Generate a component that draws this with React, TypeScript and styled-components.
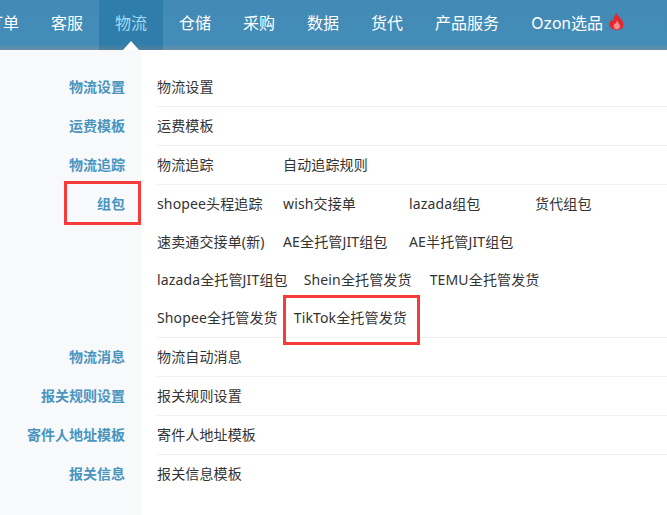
import React from "react";
import styled, { createGlobalStyle } from "styled-components";

const navItems = ["订单", "客服", "物流", "仓储", "采购", "数据", "货代", "产品服务"];

const sections = [
  { label: "物流设置", links: ["物流设置"] },
  { label: "运费模板", links: ["运费模板"] },
  { label: "物流追踪", links: ["物流追踪", "自动追踪规则"] },
  {
    label: "组包",
    links: [
      "shopee头程追踪",
      "wish交接单",
      "lazada组包",
      "货代组包",
      "速卖通交接单(新)",
      "AE全托管JIT组包",
      "AE半托管JIT组包",
      "lazada全托管JIT组包",
      "Shein全托管发货",
      "TEMU全托管发货",
      "Shopee全托管发货",
      "TikTok全托管发货",
    ],
  },
  { label: "物流消息", links: ["物流自动消息"] },
  { label: "报关规则设置", links: ["报关规则设置"] },
  { label: "寄件人地址模板", links: ["寄件人地址模板"] },
  { label: "报关信息", links: ["报关信息模板"] },
];

const GlobalStyle = createGlobalStyle`
  html, body {
    margin: 0;
    padding: 0;
    background: #fff;
    overflow: hidden;
  }
  body {
    font-family: "Noto Sans", "Noto Sans CJK SC", sans-serif;
  }
`;

const Page = styled.div`
  width: 667px;
  height: 515px;
  overflow: hidden;
  position: relative;
`;

const NavBar = styled.nav`
  display: flex;
  height: 50px;
  margin-left: -29px;
  background: linear-gradient(#438bb6 0, #438cb8 44px, #6a8fa6 50px);
`;

const NavItem = styled.a<{ $active?: boolean }>`
  position: relative;
  display: flex;
  align-items: center;
  flex-shrink: 0;
  gap: 6px;
  padding: 0 16px 6px;
  font-family: Inter, "Noto Sans CJK SC", sans-serif;
  font-size: 16px;
  white-space: nowrap;
  color: ${(p) => (p.$active ? "#a5dcf5" : "#fff")};
  background: ${(p) =>
    p.$active ? "linear-gradient(#2f7dab 0, #2f7dab 44px, #55809b 50px)" : "none"};

  ${(p) =>
    p.$active &&
    `
    &::after {
      content: "";
      position: absolute;
      left: 24px;
      bottom: 0;
      border-left: 8px solid transparent;
      border-right: 8px solid transparent;
      border-bottom: 9px solid #fff;
    }
  `}
`;

const Flame = styled.svg`
  width: 15px;
  height: 17px;
  margin-top: -2px;
`;

const Panel = styled.main`
  position: relative;
  height: 465px;
  box-sizing: border-box;
  padding-top: 18px;
  background: linear-gradient(to right, #f7f9fb 141px, #fff 141px);
`;

const Section = styled.section`
  display: grid;
  grid-template-columns: 141px 1fr;
`;

const SectionLabel = styled.div`
  padding-right: 16px;
  font-size: 14px;
  font-weight: 700;
  line-height: 38px;
  text-align: right;
  color: #4a94c0;
`;

const LinkArea = styled.div<{ $last?: boolean }>`
  margin-left: 16px;
  border-bottom: 1px solid ${(p) => (p.$last ? "transparent" : "#f1f1f1")};
`;

const LinkWrap = styled.div`
  display: flex;
  flex-wrap: wrap;
  column-gap: 16px;
  max-width: 500px;
`;

const LinkItem = styled.a`
  min-width: 110px;
  font-size: 14px;
  letter-spacing: 0.14px;
  line-height: 38px;
  white-space: nowrap;
  color: #333;
`;

const Marker = styled.div<{ $left: number; $top: number; $width: number; $height: number }>`
  position: absolute;
  left: ${(p) => p.$left}px;
  top: ${(p) => p.$top}px;
  width: ${(p) => p.$width}px;
  height: ${(p) => p.$height}px;
  box-sizing: border-box;
  border: 3px solid #f63b3b;
  pointer-events: none;
`;

function App() {
  return (
    <Page>
      <GlobalStyle />
      <NavBar>
        {navItems.map((item) => (
          <NavItem key={item} $active={item === "物流"}>
            {item}
          </NavItem>
        ))}
        <NavItem>
          Ozon选品
          <Flame viewBox="0 0 15 17">
            <path
              d="M8 0c.6 2.600 2 3.800 3.400 5.600C12.900 7.400 14.500 9 14.500 11.500 14.500 14.800 11.800 17 7.800 17 3.500 17 .5 14.700.5 11.300.5 9 1.800 7.200 3 6c.1 1.300.6 2.300 1.500 2.800C4.200 5.400 5.500 2.200 8 0z"
              fill="#e5262b"
            />
            <path
              d="M8 7.500c.4 1.600 3 3 3 5.800 0 1.900-1.400 3-3.200 3-1.900 0-3.200-1.200-3.200-3 0-1.500.9-2.500 1.700-3.200.2.600.4 1 .8 1.200C7 10 7.200 8.700 8 7.500z"
              fill="#f58f8f"
            />
          </Flame>
        </NavItem>
      </NavBar>
      <Panel>
        {sections.map((section, index) => (
          <Section key={section.label}>
            <SectionLabel>{section.label}</SectionLabel>
            <LinkArea $last={index === sections.length - 1}>
              <LinkWrap>
                {section.links.map((link) => (
                  <LinkItem key={link}>{link}</LinkItem>
                ))}
              </LinkWrap>
            </LinkArea>
          </Section>
        ))}
        <Marker $left={64} $top={131} $width={77} $height={44} />
        <Marker $left={283} $top={245} $width={137} $height={50} />
      </Panel>
    </Page>
  );
}

export default App;
